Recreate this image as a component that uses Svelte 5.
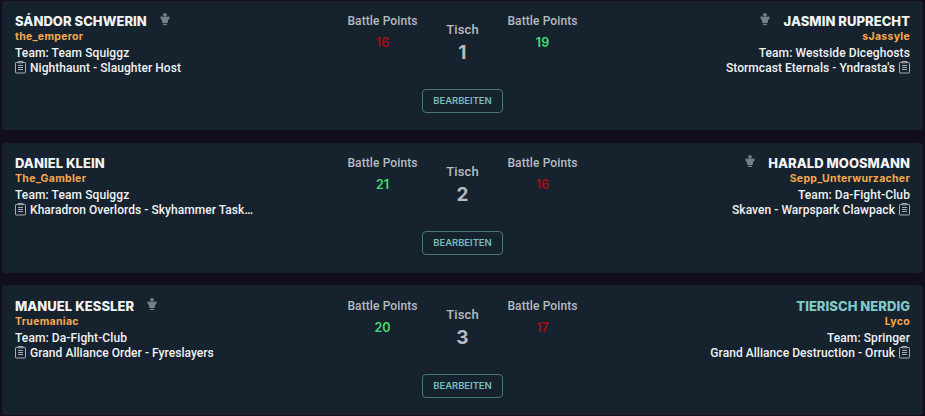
<script lang="ts">
    interface Player {
        name: string;
        nick: string;
        team: string;
        faction: string;
        points: number;
        winner: boolean;
        badge?: boolean;
        self?: boolean;
    }

    interface Pairing {
        table: number;
        players: [Player, Player];
    }

    const pairings: Pairing[] = [
        {
            table: 1,
            players: [
                { name: 'Sándor Schwerin', nick: 'the_emperor', team: 'Team Squiggz', faction: 'Nighthaunt - Slaughter Host', points: 16, winner: false, badge: true },
                { name: 'Jasmin Ruprecht', nick: 'sJassyle', team: 'Westside Diceghosts', faction: "Stormcast Eternals - Yndrasta's", points: 19, winner: true, badge: true },
            ],
        },
        {
            table: 2,
            players: [
                { name: 'Daniel Klein', nick: 'The_Gambler', team: 'Team Squiggz', faction: 'Kharadron Overlords - Skyhammer Task…', points: 21, winner: true },
                { name: 'Harald Moosmann', nick: 'Sepp_Unterwurzacher', team: 'Da-Fight-Club', faction: 'Skaven - Warpspark Clawpack', points: 16, winner: false, badge: true },
            ],
        },
        {
            table: 3,
            players: [
                { name: 'Manuel Kessler', nick: 'Truemaniac', team: 'Da-Fight-Club', faction: 'Grand Alliance Order - Fyreslayers', points: 20, winner: true, badge: true },
                { name: 'Tierisch Nerdig', nick: 'Lyco', team: 'Springer', faction: 'Grand Alliance Destruction - Orruk', points: 17, winner: false, self: true },
            ],
        },
    ];
</script>

{#snippet playerInfo(player: Player, right: boolean)}
    <div class="player" class:right>
        <div class="headline">
            <h2 class:self={player.self}>{player.name}</h2>
            {#if player.badge}
                <svg class="badge" viewBox="0 0 10 12" aria-hidden="true">
                    <circle cx="5" cy="1.9" r="1.9" />
                    <path d="M.5 3.5H2L3.5 4h3L8 3.5h1.5v2L8 7.2v2L6.7 10.2H3.3L2 9.2v-2L.5 5.5zM3 11h4v1H3z" />
                </svg>
            {/if}
        </div>
        <div class="nick">{player.nick}</div>
        <div class="team">Team: {player.team}</div>
        <div class="faction">
            <svg class="list" viewBox="0 0 11 13" aria-hidden="true">
                <path d="M3 1.5H1.2Q.5 1.5.5 2.2v9.1q0 .7.7.7h8.6q.7 0 .7-.7V2.2q0-.7-.7-.7H8" />
                <path d="M3 .5h5v1.3H3zM3 4.5h5M3 6.5h5M3 8.5h5" />
            </svg>
            <span>{player.faction}</span>
        </div>
    </div>
{/snippet}

{#snippet score(player: Player)}
    <div class="score">
        <div>Battle Points</div>
        <div class="points" class:winner={player.winner}>{player.points}</div>
    </div>
{/snippet}

<main>
    {#each pairings as { table, players }}
        <section class="card">
            {@render playerInfo(players[0], false)}
            <div class="result">
                {@render score(players[0])}
                <div class="table">
                    <div>Tisch</div>
                    <strong>{table}</strong>
                </div>
                {@render score(players[1])}
                <button>Bearbeiten</button>
            </div>
            {@render playerInfo(players[1], true)}
        </section>
    {/each}
</main>

<style>
    :global(body) {
        background: #120f1d;
    }

    main {
        box-sizing: border-box;
        height: 416px;
        padding: 0.8px 2px 0;
        overflow: hidden;
        font-family: Roboto, "Liberation Sans", sans-serif;
        color: #f1f3f4;
    }

    .card {
        box-sizing: border-box;
        display: grid;
        grid-template-columns: 1fr 240px 1fr;
        height: 129.5px;
        margin-bottom: 12.8px;
        padding: 12.4px 13px 0;
        background: #16222e;
        border-radius: 4px;
    }

    .player {
        min-width: 0;
        font-size: 12px;
        font-weight: 500;
        letter-spacing: 0.1px;
        line-height: 16px;
        white-space: nowrap;
    }

    .headline {
        display: flex;
        gap: 13px;
        height: 16px;
    }

    h2 {
        margin: 0;
        font-family: Inter, Roboto, sans-serif;
        font-size: 13px;
        font-weight: 800;
        letter-spacing: 0.05px;
        line-height: 17px;
        text-transform: uppercase;
    }

    .self {
        color: #80cbc9;
    }

    .badge {
        width: 10px;
        height: 12px;
        fill: #728087;
    }

    .nick {
        height: 16px;
        color: #f7a94b;
        font-family: Inter, Roboto, sans-serif;
        font-size: 10.5px;
        font-weight: 700;
        letter-spacing: 0.3px;
        line-height: 15px;
    }

    .faction {
        display: flex;
        gap: 4px;
        letter-spacing: 0.05px;
        line-height: 15px;
    }

    .list {
        width: 11px;
        height: 13px;
        fill: none;
        stroke: #a5adb1;
    }

    .right {
        text-align: right;
    }

    .right .headline,
    .right .faction {
        flex-direction: row-reverse;
    }

    .result {
        display: grid;
        grid-template-columns: repeat(3, 80px);
        grid-template-rows: 76px 24px;
        justify-items: center;
        color: #b6bcc1;
        font-size: 12px;
        font-weight: 500;
        letter-spacing: 0.1px;
        line-height: 16px;
        text-align: center;
        white-space: nowrap;
    }

    .points {
        margin-top: 6px;
        color: #a30f15;
        font-family: Inter, Roboto, sans-serif;
        font-size: 12.5px;
        font-weight: 600;
        letter-spacing: 0;
    }

    .winner {
        color: #43de72;
    }

    .table {
        padding-top: 9px;
        font-size: 13px;
    }

    strong {
        display: block;
        margin-top: 3px;
        font-family: Inter, Roboto, sans-serif;
        font-size: 19px;
        font-weight: 700;
        line-height: 24px;
    }

    button {
        grid-column: 2;
        width: 81px;
        height: 24px;
        padding: 0 0 1px;
        border: 1px solid #467777;
        border-radius: 4px;
        background: none;
        color: #76bdbc;
        font: 600 9.5px Inter, Roboto, sans-serif;
        letter-spacing: -0.05px;
        text-transform: uppercase;
    }
</style>
